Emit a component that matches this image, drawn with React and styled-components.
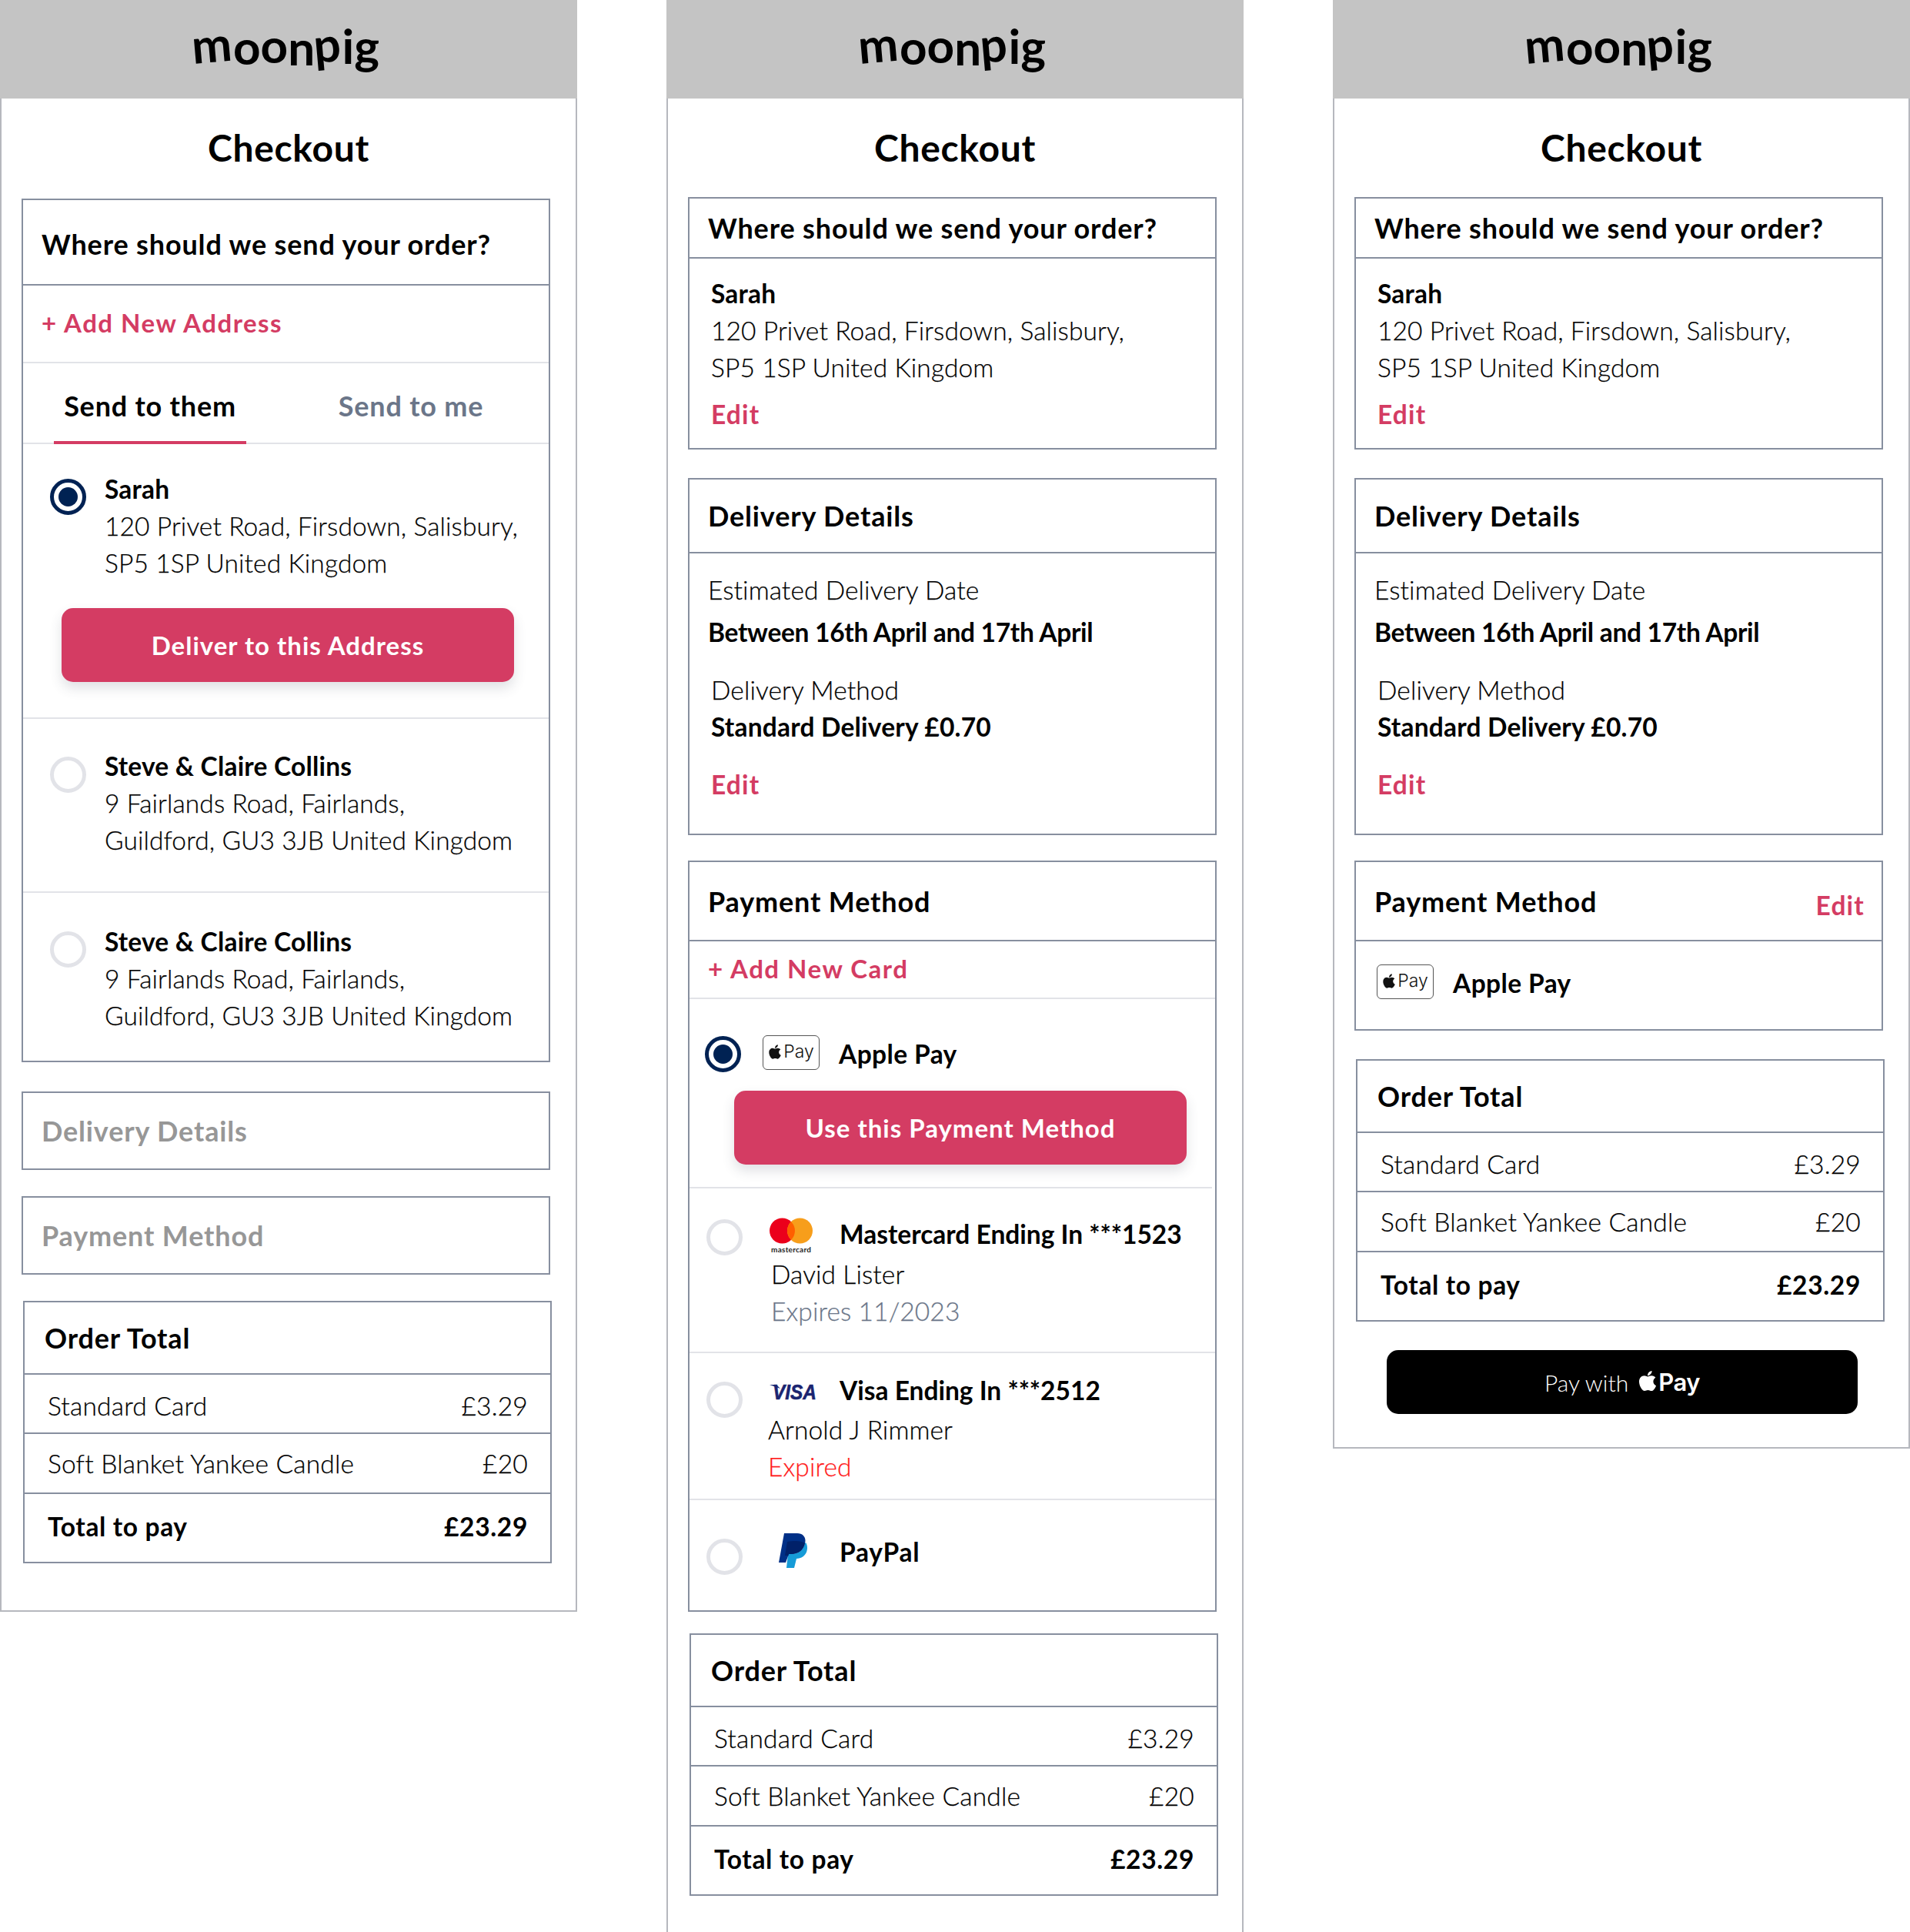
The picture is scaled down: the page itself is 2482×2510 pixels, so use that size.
import React from "react";
import styled, { createGlobalStyle } from "styled-components";
import { FaApple } from "react-icons/fa";

const Global = createGlobalStyle`
  html, body { margin: 0; padding: 0; background: #fff; }
  body { font-family: Lato, "Noto Sans", sans-serif; color: #000; }
`;

const Page = styled.div`
  display: flex;
  align-items: flex-start;
  gap: 116px;
  width: 2482px;
  height: 2510px;
  overflow: hidden;
`;
const Panel = styled.section`
  box-sizing: border-box;
  width: 750px;
  flex: none;
  border: solid #b6b8be;
  border-width: 0 2px 2px;
  padding-bottom: ${(p) => p.$pb}px;
`;
const Header = styled.header`
  height: 128px;
  margin: 0 -2px;
  background: #c4c4c4;
  display: flex;
  justify-content: center;
  padding-top: 14px;
  box-sizing: border-box;
`;
const LogoSvg = styled.svg`
  width: 262px;
  height: 100px;
`;
const Title = styled.h1`
  height: 128px;
  margin: 0;
  padding-bottom: 2px;
  box-sizing: border-box;
  display: flex;
  align-items: center;
  justify-content: center;
  font-size: 48px;
  font-weight: 700;
  letter-spacing: 0.7px;
`;
const Card = styled.div`
  box-sizing: border-box;
  width: 687px;
  margin: ${(p) => p.$mt || 0}px 0 0 ${(p) => p.$ml ?? 26}px;
  border: 2px solid #878f9f;
`;
const CardHead = styled.div`
  box-sizing: border-box;
  height: ${(p) => p.$h}px;
  display: flex;
  align-items: center;
  justify-content: space-between;
  padding: ${(p) => p.$shift || 0}px 22px 0 ${(p) => p.$pl ?? 24}px;
  border-bottom: ${(p) => (p.$plain ? "0" : "2px solid #878f9f")};
  font-size: 36px;
  font-weight: 700;
  letter-spacing: 0.85px;
  color: ${(p) => (p.$muted ? "#979797" : "#000")};
`;
const AddRow = styled.div`
  box-sizing: border-box;
  height: ${(p) => p.$h}px;
  padding: 0 24px 3px;
  display: flex;
  align-items: center;
  border-bottom: 2px solid #e2e3e8;
  color: #d43c63;
  font-size: 33px;
  font-weight: 700;
  letter-spacing: 1.5px;
`;
const Tabs = styled.div`
  box-sizing: border-box;
  height: 105px;
  padding-left: 40px;
  display: flex;
  gap: 89px;
  border-bottom: 2px solid #e2e3e8;
`;
const Tab = styled.div`
  width: 250px;
  box-sizing: border-box;
  height: 105px;
  display: flex;
  align-items: center;
  justify-content: center;
  font-size: 36px;
  font-weight: 700;
  letter-spacing: 0.8px;
  color: ${(p) => (p.$active ? "#000" : "#6b7689")};
  border-bottom: ${(p) => (p.$active ? "4px solid #d43c63" : "0")};
  padding-top: ${(p) => (p.$active ? "8px" : "5px")};
`;
const Row = styled.div`
  padding: ${(p) => p.$pt}px 0 ${(p) => p.$pb}px;
  margin-right: ${(p) => p.$mr || 0}px;
  border-bottom: ${(p) => (p.$last ? "0" : "2px solid #e2e3e8")};
`;
const Inline = styled.div`
  display: flex;
  align-items: flex-start;
  padding-left: ${(p) => p.$pl}px;
`;
const Radio = styled.span`
  box-sizing: border-box;
  flex: none;
  width: 47px;
  height: 47px;
  margin-top: ${(p) => p.$mt}px;
  margin-right: ${(p) => p.$mr}px;
  border-radius: 50%;
  border: 5px solid ${(p) => (p.$on ? "#002253" : "#e2e3e8")};
  display: flex;
  align-items: center;
  justify-content: center;
  &::after {
    content: "";
    display: ${(p) => (p.$on ? "block" : "none")};
    width: 25px;
    height: 25px;
    border-radius: 50%;
    background: #002253;
  }
`;
const Line = styled.div`
  line-height: 48px;
  height: 48px;
  white-space: nowrap;
  font-size: 33.5px;
  font-weight: ${(p) => (p.$strong ? 700 : 300)};
  -webkit-text-stroke: ${(p) => (p.$strong ? "0" : "0.25px")};
  letter-spacing: ${(p) => p.$ls ?? (p.$strong ? 0.2 : 0.1)}px;
  margin-top: ${(p) => p.$mt || 0}px;
  margin-left: ${(p) => p.$ml || 0}px;
  color: ${(p) => p.$color || "#000"};
`;
const EditLink = styled(Line)`
  color: #d43c63;
  font-weight: 700;
  letter-spacing: 1.2px;
  -webkit-text-stroke: 0;
`;
const HeadEdit = styled.span`
  color: #d43c63;
  font-size: 33.5px;
  font-weight: 700;
  letter-spacing: 1.2px;
  margin-top: 10px;
`;
const CardBody = styled.div`
  padding: ${(p) => p.$pt}px 0 ${(p) => p.$pb}px ${(p) => p.$pl ?? 28}px;
`;
const ActionButton = styled.div`
  box-sizing: border-box;
  width: 588px;
  height: 96px;
  margin: ${(p) => p.$mt}px 0 0 ${(p) => p.$ml}px;
  display: flex;
  align-items: center;
  justify-content: center;
  border-radius: 15px;
  background: #d43c63;
  color: #fff;
  font-size: 33px;
  font-weight: 700;
  letter-spacing: 1px;
  box-shadow: 0 8px 16px rgba(60, 70, 90, 0.16);
`;
const PayTitle = styled.div`
  height: ${(p) => p.$h}px;
  display: flex;
  align-items: center;
  white-space: nowrap;
  font-size: 33.5px;
  font-weight: 700;
  letter-spacing: ${(p) => p.$ls ?? 0}px;
`;
const LogoSlot = styled.div`
  flex: none;
  width: ${(p) => p.$w || 56}px;
  height: 45px;
  margin-right: ${(p) => p.$mr ?? 35}px;
  padding-left: ${(p) => p.$pl || 0}px;
  box-sizing: border-box;
  svg { display: block; overflow: visible; }
`;
const ApplePayBadge = styled.div`
  box-sizing: border-box;
  flex: none;
  width: 74px;
  height: 45px;
  margin-right: 25px;
  border: 1.5px solid #555;
  border-radius: 6px;
  display: flex;
  align-items: center;
  justify-content: center;
  gap: 2px;
  font-family: Inter, sans-serif;
  font-size: 23px;
  font-weight: 300;
  color: #111;
  svg { width: 18px; height: 21px; margin-top: -3px; }
  span { margin-top: -3px; }
`;
const Stack = styled.div`
  flex: 1;
  min-width: 0;
`;
const TotalRow = styled.div`
  box-sizing: border-box;
  height: ${(p) => p.$h}px;
  display: flex;
  align-items: center;
  justify-content: space-between;
  padding: ${(p) => p.$shift || 0}px 29px ${(p) => p.$lift || 0}px 30px;
  border-bottom: ${(p) => (p.$last ? "0" : "2px solid #878f9f")};
  font-size: 33.5px;
  font-weight: ${(p) => (p.$strong ? 700 : 300)};
  -webkit-text-stroke: ${(p) => (p.$strong ? "0" : "0.25px")};
  letter-spacing: ${(p) => (p.$strong ? 0.65 : 0.2)}px;
`;
const PayButton = styled.div`
  box-sizing: border-box;
  width: 612px;
  height: 83px;
  margin: 37px 0 0 68px;
  border-radius: 15px;
  background: #000;
  color: #fff;
  display: flex;
  align-items: center;
  justify-content: center;
  font-size: 30px;
  font-weight: 300;
  svg { width: 26px; height: 30px; margin: -4px 1px 0 12px; }
`;
const PayMark = styled.span`
  font-family: Inter, sans-serif;
  font-weight: 600;
  font-size: 31px;
  letter-spacing: -0.5px;
`;

const Logo = () => (
  <LogoSvg viewBox="0 0 262 100" aria-label="moonpig">
    <text
      x="7"
      y="69"
      fontFamily="Lato, sans-serif"
      fontWeight="700"
      fontSize="62"
      rotate="-5 0 0 0 -5 0 0"
      dy="0 1 -2 3 -3 1 0"
    >
      moonpig
    </text>
  </LogoSvg>
);

const Mastercard = () => (
  <svg width="56" height="45" viewBox="0 0 56 45">
    <circle cx="16.5" cy="16" r="16.5" fill="#eb001b" />
    <circle cx="39.5" cy="16" r="16.5" fill="#f79e1b" />
    <path d="M28 4.2a16.5 16.5 0 0 1 0 23.6a16.5 16.5 0 0 1 0-23.6z" fill="#ff5f00" />
    <text x="2" y="44" fontFamily="Lato, sans-serif" fontSize="10" fontWeight="700" textLength="52" fill="#222">
      mastercard
    </text>
  </svg>
);
const Visa = () => (
  <svg width="62" height="45" viewBox="0 0 62 45">
    <path d="M0 15 H9 L14 20 Z" fill="#1a2a78" />
    <text x="4" y="34" fontFamily="Liberation Sans, sans-serif" fontStyle="italic" fontWeight="700" fontSize="27" textLength="57" lengthAdjust="spacingAndGlyphs" stroke="#1a2470" strokeWidth="0.6" fill="#1a2470">
      VISA
    </text>
  </svg>
);
const PayPal = () => (
  <svg width="39" height="45" viewBox="0 0 39 45">
    <path d="M35 12 C39 17 38 32 23 33 L20 45 H10 L12 27 H16 C25 27 32 22 34 13 Z" fill="#169bd7" />
    <path d="M7 0 H24 C32 0 36 6 34 13 C32 22 25 27 16 27 H13 L9 38 H0 Z" fill="#003087" />
    <path d="M11 11 C22 9 30 10 34 13 C32 22 25 27 16 27 H13 L12.5 29 H8 Z" fill="#012169" />
  </svg>
);
const ApplePay = () => (
  <ApplePayBadge>
    <FaApple />
    <span>Pay</span>
  </ApplePayBadge>
);

const OrderTotal = ({ mt, ml }) => (
  <Card $mt={mt} $ml={ml}>
    <CardHead $h={94} $pl={26}>Order Total</CardHead>
    <TotalRow $h={77} $shift={5}>
      <span>Standard Card</span>
      <span>£3.29</span>
    </TotalRow>
    <TotalRow $h={78}>
      <span>Soft Blanket Yankee Candle</span>
      <span>£20</span>
    </TotalRow>
    <TotalRow $h={88} $lift={4} $strong $last>
      <span>Total to pay</span>
      <span>£23.29</span>
    </TotalRow>
  </Card>
);

const AddressSummary = () => (
  <Card>
    <CardHead $h={78}>Where should we send your order?</CardHead>
    <CardBody $pt={21} $pb={20}>
      <Line $strong>Sarah</Line>
      <Line>120 Privet Road, Firsdown, Salisbury,</Line>
      <Line>SP5 1SP United Kingdom</Line>
      <EditLink $mt={13}>Edit</EditLink>
    </CardBody>
  </Card>
);
const DeliverySummary = () => (
  <Card $mt={37}>
    <CardHead $h={96}>Delivery Details</CardHead>
    <CardBody $pt={23} $pb={40} $pl={24}>
      <Line>Estimated Delivery Date</Line>
      <Line $strong $ls={-0.3} $mt={7}>Between 16th April and 17th April</Line>
      <Line $mt={27} $ml={4}>Delivery Method</Line>
      <Line $strong $ml={4}>Standard Delivery £0.70</Line>
      <EditLink $mt={27} $ml={4}>Edit</EditLink>
    </CardBody>
  </Card>
);

const Address = ({ pt, pb, on, radioTop, name, lines, last, children }) => (
  <Row $pt={pt} $pb={pb} $last={last}>
    <Inline $pl={35}>
      <Radio $on={on} $mt={radioTop} $mr={24} />
      <Stack>
        <Line $strong>{name}</Line>
        {lines.map((l) => (
          <Line key={l}>{l}</Line>
        ))}
      </Stack>
    </Inline>
    {children}
  </Row>
);

const PanelOne = () => (
  <Panel $pb={61}>
    <Header><Logo /></Header>
    <Title>Checkout</Title>
    <Card $mt={2}>
      <CardHead $h={111} $shift={5}>Where should we send your order?</CardHead>
      <AddRow $h={101}>+ Add New Address</AddRow>
      <Tabs>
        <Tab $active>Send to them</Tab>
        <Tab>Send to me</Tab>
      </Tabs>
      <Address pt={34} pb={46} on radioTop={11} name="Sarah" lines={["120 Privet Road, Firsdown, Salisbury,", "SP5 1SP United Kingdom"]}>
        <ActionButton $mt={35} $ml={50}>Deliver to this Address</ActionButton>
      </Address>
      <Address pt={37} pb={43} radioTop={12} name="Steve & Claire Collins" lines={["9 Fairlands Road, Fairlands,", "Guildford, GU3 3JB United Kingdom"]} />
      <Address pt={39} pb={35} radioTop={11} last name="Steve & Claire Collins" lines={["9 Fairlands Road, Fairlands,", "Guildford, GU3 3JB United Kingdom"]} />
    </Card>
    <Card $mt={38}>
      <CardHead $h={98} $muted $plain>Delivery Details</CardHead>
    </Card>
    <Card $mt={34}>
      <CardHead $h={98} $muted $plain>Payment Method</CardHead>
    </Card>
    <OrderTotal mt={34} ml={28} />
  </Panel>
);

const PanelTwo = () => (
  <Panel $pb={60}>
    <Header><Logo /></Header>
    <Title>Checkout</Title>
    <AddressSummary />
    <DeliverySummary />
    <Card $mt={33}>
      <CardHead $h={103}>Payment Method</CardHead>
      <AddRow $h={75}>+ Add New Card</AddRow>
      <Row $pt={47} $pb={29} $mr={4}>
        <Inline $pl={20}>
          <Radio $on $mt={1} $mr={28} />
          <ApplePay />
          <PayTitle $h={47} $ls={0.4}>Apple Pay</PayTitle>
        </Inline>
        <ActionButton $mt={24} $ml={58}>Use this Payment Method</ActionButton>
      </Row>
      <Row $pt={39} $pb={29}>
        <Inline $pl={22}>
          <Radio $mt={1} $mr={35} />
          <Stack>
            <Inline $pl={0}>
              <LogoSlot><Mastercard /></LogoSlot>
              <PayTitle $h={40}>Mastercard Ending In ***1523</PayTitle>
            </Inline>
            <Line $mt={3} $ml={2}>David Lister</Line>
            <Line $ml={2} $color="#6b7689">Expires 11/2023</Line>
          </Stack>
        </Inline>
      </Row>
      <Row $pt={26} $pb={18}>
        <Inline $pl={22}>
          <Radio $mt={11} $mr={35} />
          <Stack>
            <Inline $pl={0}>
              <LogoSlot><Visa /></LogoSlot>
              <PayTitle $h={43}>Visa Ending In ***2512</PayTitle>
            </Inline>
            <Line $mt={4} $ml={-2}>Arnold J Rimmer</Line>
            <Line $ml={-2} $color="#ff1a1a">Expired</Line>
          </Stack>
        </Inline>
      </Row>
      <Row $pt={43} $pb={46} $last>
        <Inline $pl={22}>
          <Radio $mt={7} $mr={35} />
          <LogoSlot $pl={12}><PayPal /></LogoSlot>
          <PayTitle $h={47} $ls={0.8}>PayPal</PayTitle>
        </Inline>
      </Row>
    </Card>
    <OrderTotal mt={28} ml={28} />
  </Panel>
);

const PanelThree = () => (
  <Panel $pb={43}>
    <Header><Logo /></Header>
    <Title>Checkout</Title>
    <AddressSummary />
    <DeliverySummary />
    <Card $mt={33}>
      <CardHead $h={103}>
        Payment Method
        <HeadEdit>Edit</HeadEdit>
      </CardHead>
      <Inline $pl={27}>
        <Row $pt={30} $pb={37} $last>
          <Inline $pl={0}>
            <ApplePay />
            <PayTitle $h={47} $ls={0.4}>Apple Pay</PayTitle>
          </Inline>
        </Row>
      </Inline>
    </Card>
    <OrderTotal mt={37} ml={28} />
    <PayButton>
      <span>Pay with</span>
      <FaApple />
      <PayMark>Pay</PayMark>
    </PayButton>
  </Panel>
);

export default function App() {
  return (
    <>
      <Global />
      <Page>
        <PanelOne />
        <PanelTwo />
        <PanelThree />
      </Page>
    </>
  );
}
